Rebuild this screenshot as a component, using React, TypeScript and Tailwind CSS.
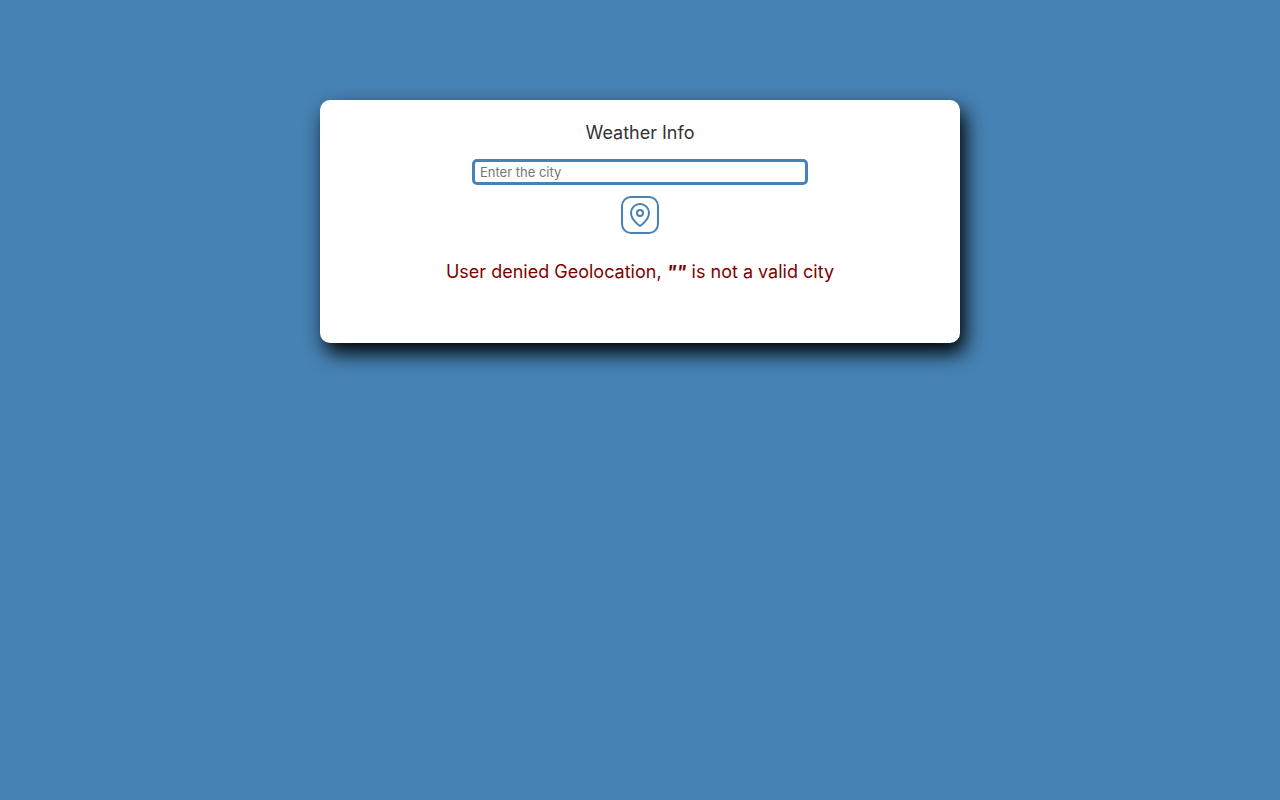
import { useState } from "react";
import { FiMapPin } from "react-icons/fi";

export default function App() {
  const [city, setCity] = useState("");
  return (
    <div className="min-h-screen bg-[#4682b4] pt-[100px] font-['Inter',sans-serif] text-[#333333]">
      <main className="mx-auto flex w-1/2 flex-col items-center rounded-[10px] bg-white pt-5 pb-[58px] shadow-[5px_10px_20px_#000000]">
        <h1 className="text-lg leading-[26px]">Weather Info</h1>
        <input
          type="text"
          aria-label="City"
          placeholder="Enter the city"
          value={city}
          onChange={(event) => setCity(event.target.value)}
          className="mt-[13px] h-[26px] w-[336px] rounded-[5px] border-3 border-[#4682b4] px-[5px] text-[13px] outline-none placeholder:text-[#757575]"
        />
        <button
          type="button"
          aria-label="Use my location"
          className="mt-[11px] flex size-[38px] items-center justify-center rounded-[10px] border-2 border-[#4682b4] text-[#4682b4]"
        >
          <FiMapPin size={24} />
        </button>
        <p className="mt-[25px] text-lg leading-[26px] text-[#800000]">
          User denied Geolocation, <b><i>""</i></b> is not a valid city
        </p>
      </main>
    </div>
  );
}
